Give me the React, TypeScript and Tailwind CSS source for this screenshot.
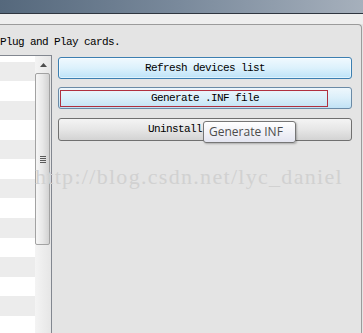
import React from "react";

const mono = { fontFamily: '"Liberation Mono", "DejaVu Sans Mono", monospace' };

function ListRows() {
  const rows = Array.from({ length: 14 }, (_, i) => i);
  return (
    <div className="flex w-[35px] flex-col">
      <div className="h-[6px] bg-white" />
      {rows.map((i) => (
        <div
          key={i}
          className={i % 2 === 0 ? "h-[20px] bg-[#ececec]" : "h-[20px] bg-white"}
        />
      ))}
    </div>
  );
}

function ScrollBar() {
  return (
    <div className="flex w-[16px] flex-col bg-gradient-to-r from-[#f4f4f4] to-[#e6e6e6]">
      {/* up arrow */}
      <div className="flex h-[17px] items-center justify-center">
        <svg width="7" height="4" viewBox="0 0 7 4">
          <path d="M3.5 0 L7 4 L0 4 Z" fill="#4d4d4d" />
        </svg>
      </div>
      {/* thumb */}
      <div className="flex h-[172px] w-[15px] items-center justify-center rounded-[2px] border border-[#a2a2a2] bg-gradient-to-r from-[#f6f6f6] via-[#e8e8e8] to-[#d2d2d2]">
        <div className="flex flex-col gap-[1px]">
          <div className="h-px w-[6px] bg-[#5a5a5a]" />
          <div className="h-px w-[6px] bg-[#5a5a5a]" />
          <div className="h-px w-[6px] bg-[#5a5a5a]" />
          <div className="h-px w-[6px] bg-[#5a5a5a]" />
        </div>
      </div>
    </div>
  );
}

export default function App() {
  return (
    <div
      className="relative h-[333px] w-[363px] overflow-hidden bg-[#e4e4e4]"
      style={mono}
    >
      {/* window caption */}
      <div className="h-[13px] bg-gradient-to-r from-[#55687c] via-[#7a8a9c] to-[#a6b0bc]" />
      <div className="h-px bg-[#2f3640]" />
      <div className="h-[10px] bg-[#eeeeee]" />

      {/* group box */}
      <div className="mr-[1px] rounded-tr-[4px] border-t border-r border-[#9b9b9b]">
        <div className="pt-[10px] pl-0 text-[11px] leading-[14px] tracking-[-0.6px] text-black">
          Plug and Play cards.
        </div>

        <div className="mt-[6px] flex">
          {/* device list */}
          <div className="flex h-[280px] w-[52px] border-t border-r border-[#828790]">
            <ListRows />
            <ScrollBar />
          </div>

          {/* buttons */}
          <div className="ml-[6px] mt-[2px] flex w-[294px] flex-col text-[11px] tracking-[-0.6px] text-black">
            <button className="flex h-[22px] items-center justify-center rounded-[3px] border border-[#3c7fb1] bg-gradient-to-b from-[#f0f9fe] via-[#dcf1fc] to-[#bde3f8] shadow-[inset_0_0_0_1px_rgba(255,255,255,0.5)]">
              Refresh devices list
            </button>
            <button className="relative mt-[8px] flex h-[22px] items-center justify-center rounded-[3px] border border-[#6a8aa6] bg-gradient-to-b from-[#eef7fc] via-[#dbeffa] to-[#c1e2f5]">
              <span className="absolute top-[2px] bottom-[1px] left-[1px] right-[23px] border border-[#b0303f]" />
              Generate .INF file
            </button>
            {/* label is partly hidden by the tooltip; only the visible part is drawn */}
            <button className="mt-[9px] flex h-[23px] items-center justify-start rounded-[3px] border border-[#707070] bg-gradient-to-b from-[#f4f4f4] via-[#e6e6e6] to-[#d3d3d3] pl-[89px]">
              Uninstall
            </button>
          </div>
        </div>
      </div>

      {/* watermark */}
      <div
        className="pointer-events-none absolute left-[35px] top-[164px] text-[22px] leading-[26px] tracking-[1.3px] text-[#d1d1d1]"
        style={{ fontFamily: '"Liberation Serif", serif' }}
      >
        http://blog.csdn.net/lyc_daniel
      </div>

      {/* tooltip */}
      <div
        className="absolute left-[203px] top-[121px] flex h-[22px] w-[93px] items-center rounded-[3px] border border-[#767676] bg-gradient-to-b from-[#ffffff] to-[#e4e5f0] pl-[5px] text-[12px] text-[#4c4c4c] shadow-[1px_1px_2px_rgba(0,0,0,0.25)]"
        style={{ fontFamily: '"Open Sans", "Noto Sans", sans-serif' }}
      >
        Generate INF
      </div>
    </div>
  );
}
